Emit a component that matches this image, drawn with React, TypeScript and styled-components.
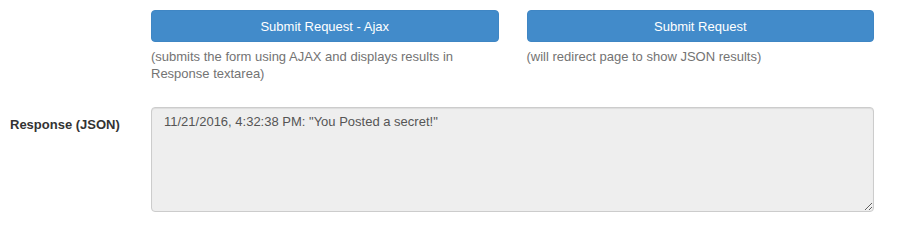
import React from 'react'
import styled, { createGlobalStyle } from 'styled-components'

const GlobalStyle = createGlobalStyle`
  html, body {
    margin: 0;
    padding: 0;
    background: #fff;
  }
  body {
    font-family: "Liberation Sans", Arial, sans-serif;
    font-size: 13px;
    color: #333;
  }
`

const Form = styled.form`
  padding: 10px 26px 0 10px;
  width: 900px;
  box-sizing: border-box;
`

const FormRow = styled.div<{ gapTop?: number }>`
  display: grid;
  grid-template-columns: 141px 1fr;
  margin-top: ${({ gapTop }) => gapTop ?? 0}px;
`

const Label = styled.label`
  font-weight: bold;
  font-size: 13px;
  line-height: 15px;
  padding-top: 10px;
  color: #333;
`

const ButtonGrid = styled.div`
  display: grid;
  grid-template-columns: 1fr 1fr;
  column-gap: 28px;
`

const Action = styled.div`
  display: flex;
  flex-direction: column;
`

const PrimaryButton = styled.button`
  height: 32px;
  background: #428bca;
  border: 1px solid #3f86c4;
  border-radius: 4px;
  color: #fff;
  font-family: "Liberation Sans", Arial, sans-serif;
  font-size: 13px;
  cursor: pointer;
  padding: 0 12px;
`

const HelpText = styled.div`
  margin-top: 6px;
  color: #737373;
  font-size: 13px;
  line-height: 17px;
  padding-right: 20px;
`

const ResponseArea = styled.textarea`
  box-sizing: border-box;
  width: 100%;
  height: 105px;
  background: #eeeeee;
  border: 1px solid #cccccc;
  border-radius: 4px;
  padding: 5px 12px;
  font-family: "Liberation Sans", Arial, sans-serif;
  font-size: 13px;
  line-height: 17px;
  color: #555;
  box-shadow: inset 0 1px 1px rgba(0, 0, 0, 0.075);
  resize: vertical;
  display: block;
  margin: 0;
`

export default function App() {
  return (
    <>
      <GlobalStyle />
      <Form onSubmit={(e) => e.preventDefault()}>
        <FormRow>
          <div />
          <ButtonGrid>
            <Action>
              <PrimaryButton type="button">Submit Request - Ajax</PrimaryButton>
              <HelpText>(submits the form using AJAX and displays results in Response textarea)</HelpText>
            </Action>
            <Action>
              <PrimaryButton type="submit">Submit Request</PrimaryButton>
              <HelpText>(will redirect page to show JSON results)</HelpText>
            </Action>
          </ButtonGrid>
        </FormRow>
        <FormRow gapTop={25}>
          <Label htmlFor="response">Response (JSON)</Label>
          <ResponseArea
            id="response"
            readOnly
            defaultValue={'11/21/2016, 4:32:38 PM: "You Posted a secret!"'}
          />
        </FormRow>
      </Form>
    </>
  )
}
